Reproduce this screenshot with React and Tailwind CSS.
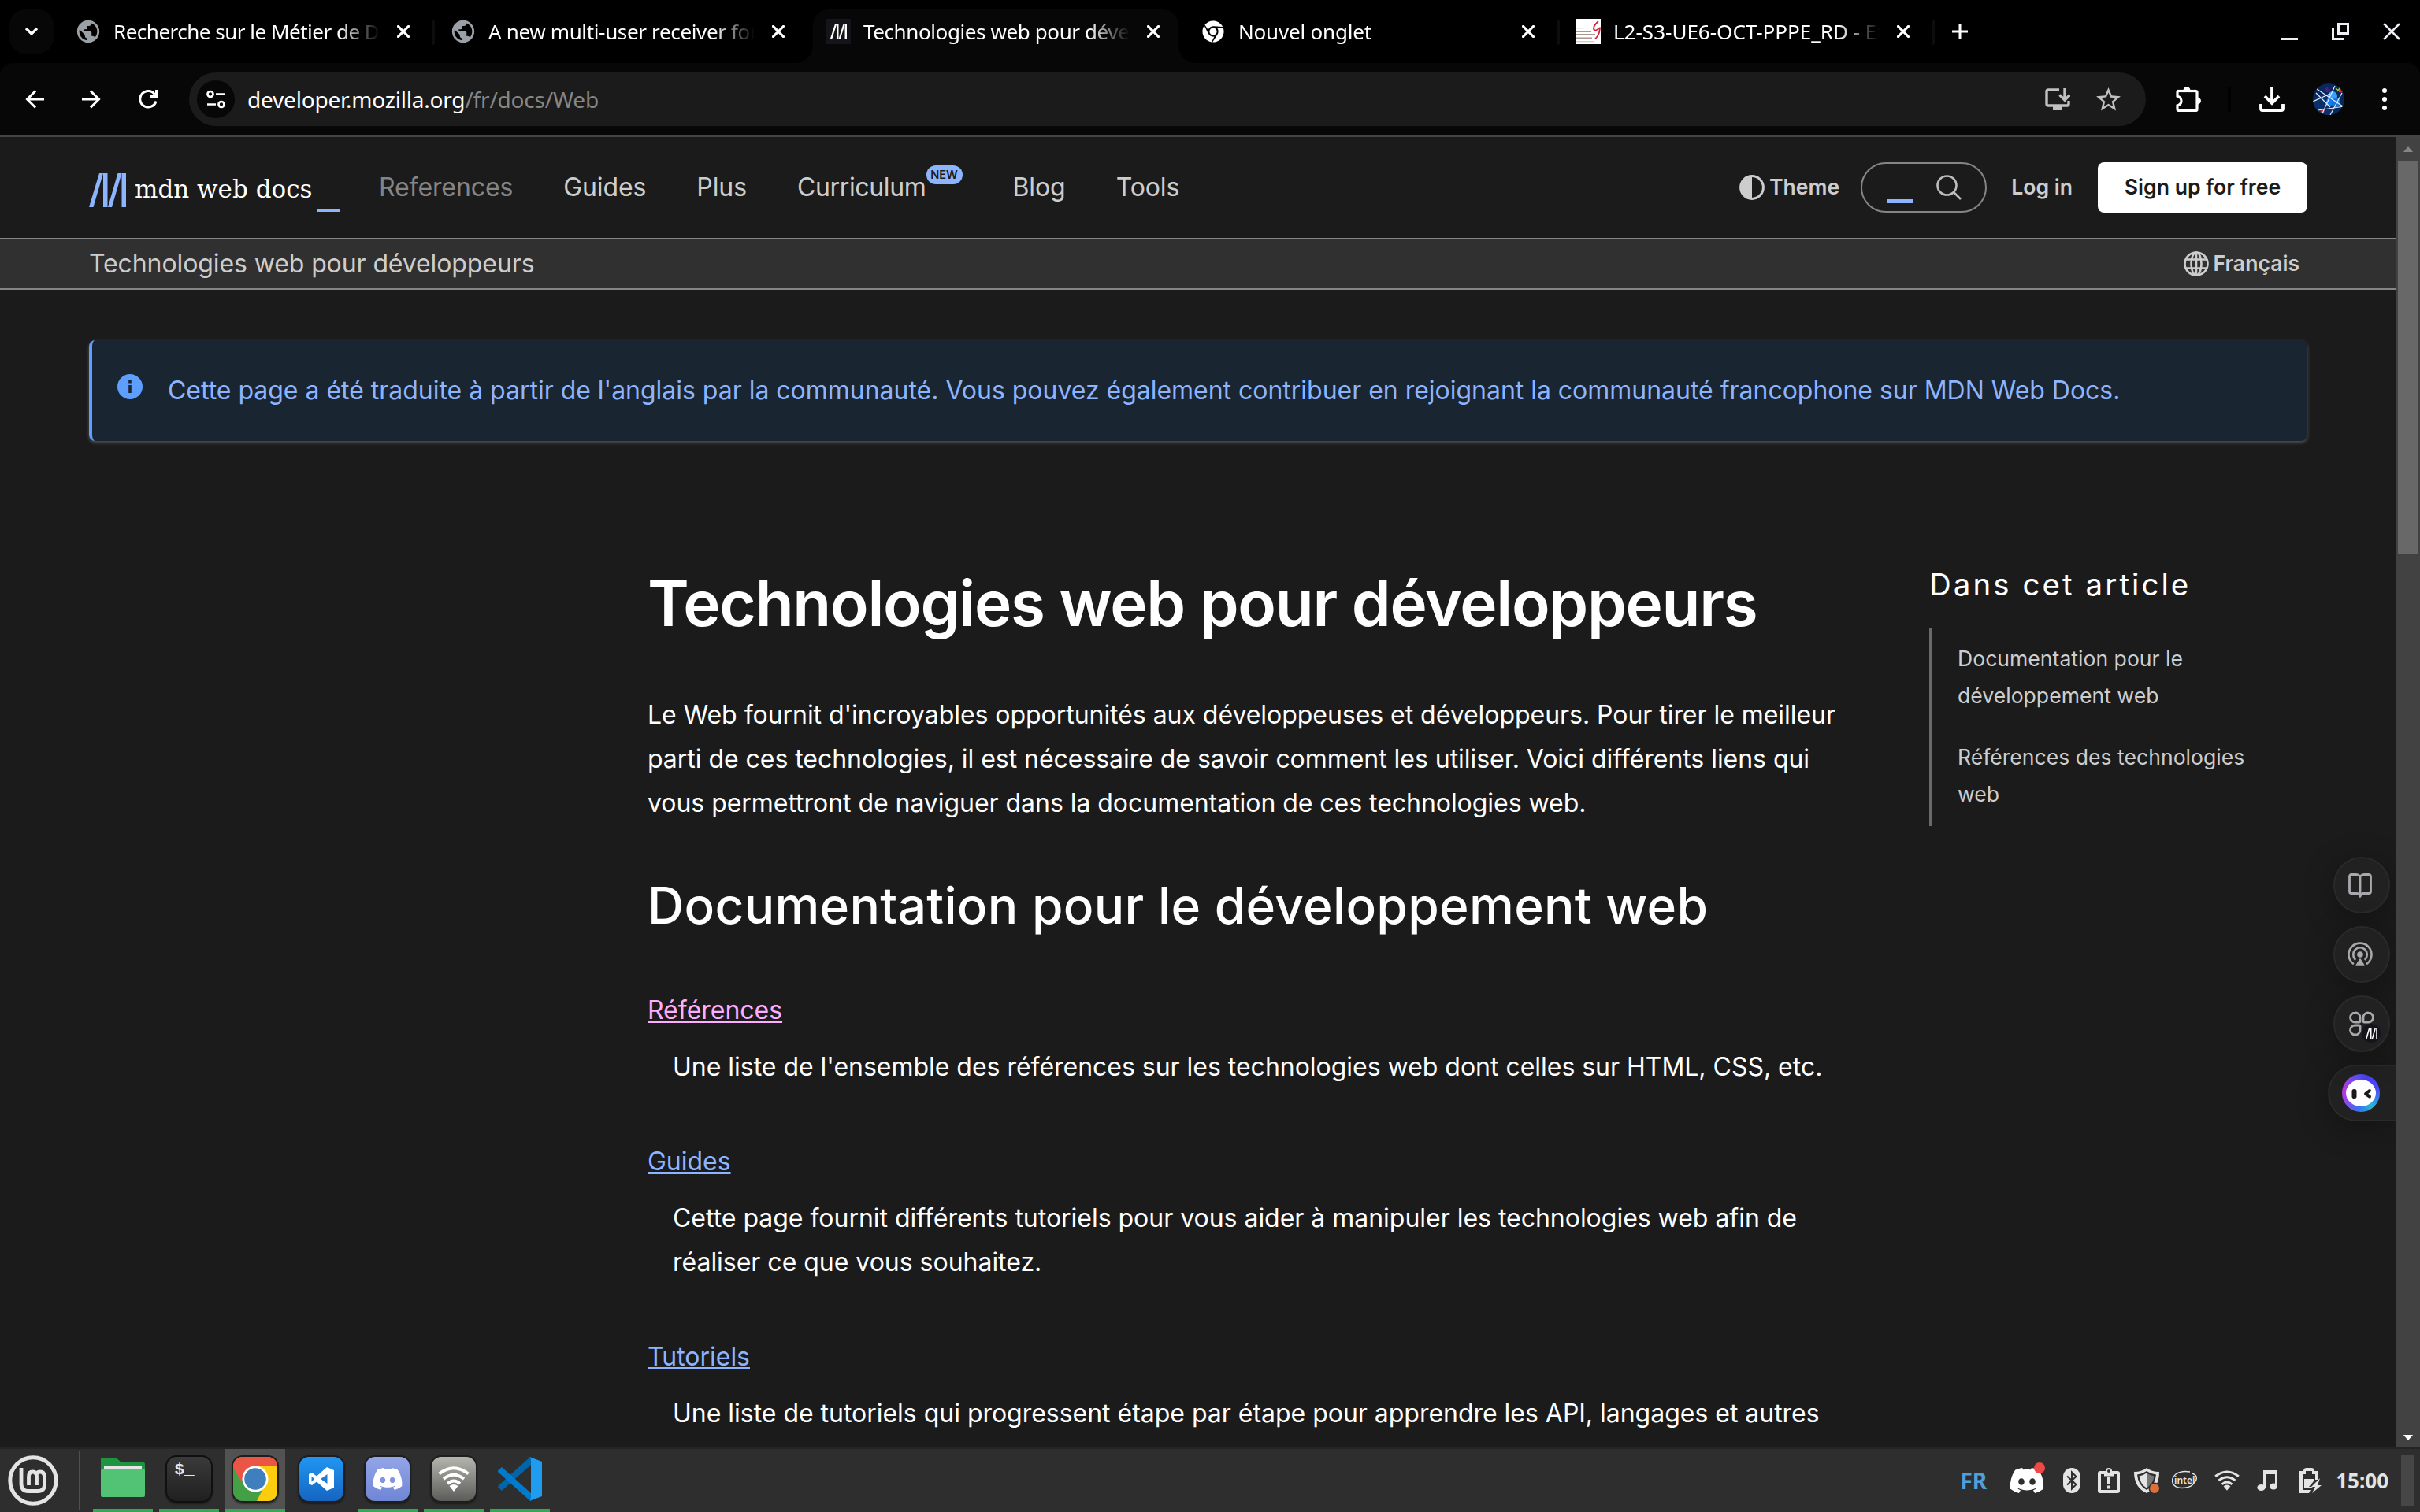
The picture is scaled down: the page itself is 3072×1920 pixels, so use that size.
import React from "react";
import { FaChrome, FaDiscord } from "react-icons/fa";
import { MdPublic, MdStarOutline } from "react-icons/md";

const MdnMark = ({ className }) => (
  <svg viewBox="0 0 47 43" className={className} fill="currentColor" preserveAspectRatio="none">
    <polygon points="0,43 5.5,43 18,0 13,0" />
    <rect x="18" y="0" width="5.5" height="43" />
    <polygon points="24,43 29,43 41.5,0 36.5,0" />
    <rect x="41.5" y="0" width="5.5" height="43" />
  </svg>
);

const Cross = ({ className, w = 3.4 }) => (
  <svg viewBox="0 0 22 22" className={className} stroke="currentColor" strokeWidth={w} strokeLinecap="square">
    <path d="M2 2 20 20M20 2 2 20" />
  </svg>
);

const FacultyIcon = () => (
  <svg viewBox="0 0 32 32" className="h-8 w-8 bg-white">
    <g fill="#a9968c">
      <rect x="1" y="11" width="8" height="1.3" opacity=".5" />
      <rect x="1" y="15" width="19" height="2" />
      <rect x="1" y="19" width="24" height="2" />
      <rect x="1" y="23.5" width="20" height="2" />
      <rect x="1" y="28" width="23" height="1.3" opacity=".5" />
    </g>
    <path d="M29 3C23 8 21.500 13 24.500 14.500c3 .5 5-3 6.500-3-.5 5-1 9-6 14" fill="none" stroke="#d0203a" strokeWidth="1.800" />
  </svg>
);

function Tab({ icon, title, active, separator, spacing = "" }) {
  return (
    <div className="relative h-20 w-[476px] shrink-0 pt-3">
      <div className={active ? "flex h-[68px] w-[464px] items-start rounded-t-[20px] bg-[#070707]" : "flex h-[68px] w-[464px] items-start"}>
        <div className="flex h-14 w-full items-center pl-4">
          <div className="flex h-8 w-8 items-center justify-center">{icon}</div>
          <div
            className={
              "ml-4 w-[338px] whitespace-nowrap text-[26px] leading-10 text-white [mask-image:linear-gradient(to_right,#000_286px,transparent_338px)] " + spacing
            }
          >
            {title}
          </div>
          <Cross className="ml-[22px] h-4 w-4 text-white" w={4.4} />
        </div>
      </div>
      {separator && <div className="absolute left-[468px] top-[25px] h-8 w-1 rounded bg-[#0d0d0d]" />}
      {active && (
        <>
          <svg viewBox="0 0 24 24" className="absolute -left-6 bottom-0 h-6 w-6" fill="#070707"><path d="M24 0v24H0C16 24 24 14 24 0Z" /></svg>
          <svg viewBox="0 0 24 24" className="absolute left-[464px] bottom-0 h-6 w-6" fill="#070707"><path d="M0 0v24h24C8 24 0 14 0 0Z" /></svg>
        </>
      )}
    </div>
  );
}

const Globe = () => <MdPublic className="h-[34px] w-[34px] shrink-0 text-[#9aa0a6]" />;

function TabStrip() {
  return (
    <div className="flex h-20 items-start bg-black">
      <div className="ml-3 mt-3 flex h-14 w-14 items-center justify-center rounded-[20px] bg-[#070707]">
        <svg viewBox="0 0 18 12" className="h-3 w-[18px]" fill="none" stroke="#fff" strokeWidth="3.2"><path d="M2 2l7 7 7-7" /></svg>
      </div>
      <div className="ml-3 flex">
        <Tab icon={<Globe />} title="Recherche sur le Métier de D" spacing="tracking-[-0.5px]" separator />
        <Tab icon={<Globe />} title="A new multi-user receiver for" spacing="tracking-[-0.35px]" />
        <Tab
          active
          icon={<div className="flex h-8 w-8 items-center justify-center bg-[#15141a]"><MdnMark className="h-[18px] w-[21px] text-white" /></div>}
          title="Technologies web pour déve"
          spacing="tracking-[-0.4px]"
        />
        <Tab icon={<FaChrome className="h-7 w-7 text-white" />} title="Nouvel onglet" spacing="tracking-[-0.2px]" separator />
        <Tab icon={<FacultyIcon />} title="L2-S3-UE6-OCT-PPPE_RD - Ex" separator />
      </div>
      <svg viewBox="0 0 20 20" className="ml-[18px] mt-[30px] h-5 w-5" stroke="#fff" strokeWidth="3"><path d="M10 0v20M0 10h20" /></svg>
      <div className="ml-auto flex items-end gap-[43px] pr-[25px] pt-[29px]">
        <div className="h-[3px] w-[22px] bg-[#f0eef5]" />
        <svg viewBox="0 0 22 22" className="h-[22px] w-[22px]" fill="none" stroke="#f0eef5" strokeWidth="3"><path d="M8.5 1.5h12v12h-12zM1.5 6.500v14H15" /></svg>
        <Cross className="h-[22px] w-[22px] text-[#f0eef5]" w={2.6} />
      </div>
    </div>
  );
}

function Toolbar() {
  return (
    <div className="bg-black">
      <div className="flex h-[92px] items-center rounded-t-2xl bg-[#070707] text-white">
        <svg viewBox="0 0 24 24" className="ml-8 h-6 w-6" fill="none" stroke="currentColor" strokeWidth="3"><path d="M24 12H3M13 1.500 2.500 12 13 22.500" /></svg>
        <svg viewBox="0 0 24 24" className="ml-12 h-6 w-6" fill="none" stroke="currentColor" strokeWidth="3"><path d="M0 12h21M11 1.500 21.500 12 11 22.500" /></svg>
        <svg viewBox="0 0 24 24" className="ml-12 h-6 w-6" fill="none" stroke="currentColor" strokeWidth="3"><path d="M22 14.500A10.300 10.300 0 1 1 20.500 5.800" /><path d="M22.500 0v8.500H14" /></svg>
        <div className="ml-10 flex h-[68px] w-[2484px] items-center rounded-full bg-[#1b1b1b]">
          <div className="ml-2.5 flex h-12 w-12 items-center justify-center rounded-full bg-[#070707]">
            <svg viewBox="0 0 24 24" className="h-6 w-6" fill="none" stroke="#fff" strokeWidth="2.700"><circle cx="5" cy="5.500" r="3.500" /><path d="M12 5.500h11M1 18.500h11" /><circle cx="19" cy="18.500" r="3.500" /></svg>
          </div>
          <div className="ml-4 text-[28px] leading-10 tracking-[-0.2px]">
            developer.mozilla.org<span className="text-[#868686]">/fr/docs/Web</span>
          </div>
          <svg viewBox="0 0 32 29" className="ml-auto h-[29px] w-8" fill="none" stroke="#c0c0c0" strokeWidth="3.400"><path d="M18 2H4Q2 2 2 4v16q0 2 2 2h24q2 0 2-2v-4" /><path d="M25 0v14M18.500 8.500 25 15l6.500-6.500" /><path d="M10 25.500h12" strokeWidth="5" /></svg>
          <MdStarOutline className="ml-[30px] mr-[29px] h-[37px] w-[37px] text-[#c0c0c0]" />
        </div>
        <svg viewBox="0 0 32 32" className="ml-[38px] h-8 w-8">
          <path d="M4 5.500h7M17 5.500h8.500q1.500 0 1.500 1.500V29q0 1.500-1.500 1.500H4q-2 0-2-1.500v-5q5-1.500 5-6t-5-6V7q0-1.500 2-1.500Z" fill="none" stroke="#fff" strokeWidth="3.200" />
          <path d="M2 5.500h24" stroke="#fff" strokeWidth="3.200" />
          <path d="M9.500 5a4.500 5 0 0 1 9 0ZM27 13.500a5 4.500 0 0 1 0 9Z" fill="#fff" />
        </svg>
        <div className="ml-[34px] h-8 w-1 rounded bg-black" />
        <svg viewBox="0 0 32 32" className="ml-9 h-8 w-8" fill="none" stroke="#fff" strokeWidth="3.800"><path d="M16 0v20M7 12l9 9 9-9" /><path d="M2 22v6q0 2 2 2h24q2 0 2-2v-6" /></svg>
        <svg viewBox="0 0 40 40" className="ml-9 h-10 w-10 rounded-full bg-[#08285c]">
          <circle cx="14" cy="28" r="14" fill="#0b3068" />
          <circle cx="25" cy="16" r="6" fill="#3aa0ff" /><circle cx="22" cy="23" r="5" fill="#1580f0" /><circle cx="29" cy="24" r="6" fill="#1376dd" />
          <circle cx="36" cy="9" r="2.500" fill="#d02020" /><circle cx="12" cy="35" r="2.500" fill="#d02a2a" />
          <path d="M15 7l7 2M18 4v7" stroke="#4b1a8c" strokeWidth="2.500" /><path d="M29 6l6 5M35 5l-4 5" stroke="#a8c820" strokeWidth="1.500" />
          <path d="M5 7l33 22M0 23l22-10M4 12l18 18M6 34l34-5M37 12L22 40M28 3L12 38" stroke="#e4ecff" strokeWidth="1.200" />
        </svg>
        <svg viewBox="0 0 6 28" className="ml-12 h-7 w-1.5" fill="#fff"><circle cx="3" cy="3" r="3" /><circle cx="3" cy="14" r="3" /><circle cx="3" cy="25" r="3" /></svg>
      </div>
      <div className="h-0.5 bg-[#444444]" />
    </div>
  );
}

function SiteHeader() {
  return (
    <header>
      <div className="flex h-32 items-center pl-[113px] pr-[113px] text-[32px] text-[#cdcdcd]">
        <div className="flex w-[320px] items-end pt-1">
          <MdnMark className="h-[43px] w-[47px] shrink-0 text-[#8cb4ff]" />
          <span className="ml-[11px] w-[227px] shrink-0 whitespace-nowrap font-['DejaVu_Serif'] text-[31px] leading-[45px] text-white">mdn web docs</span>
          <span className="-mb-[6px] ml-1 h-1 w-[30px] shrink-0 bg-[#8cb4ff]" />
        </div>
        <nav className="ml-12 flex items-center gap-16 tracking-[-0.1px]">
          <span className="text-[#858585]">References</span>
          <span>Guides</span>
          <span>Plus</span>
          <span className="flex items-center tracking-[-0.35px]">
            Curriculum
            <span className="mb-8 flex h-6 w-[46px] items-center justify-center rounded-full bg-[#8cb4ff] text-[14.5px] font-semibold tracking-normal text-[#1b1b1b]">NEW</span>
          </span>
          <span>Blog</span>
          <span>Tools</span>
        </nav>
        <div className="ml-auto flex items-center text-[26.6px] font-semibold">
          <svg viewBox="0 0 32 32" className="h-8 w-8"><circle cx="16" cy="16" r="14.400" fill="none" stroke="#cdcdcd" strokeWidth="3" /><path d="M16 1a15 15 0 0 0 0 30Z" fill="#cdcdcd" /></svg>
          <span className="ml-1.5">Theme</span>
          <div className="ml-[27px] flex h-16 w-40 items-center rounded-full border-2 border-[#858585]">
            <div className="ml-8 mt-[35px] h-[5px] w-8 bg-[#8cb4ff]" />
            <svg viewBox="0 0 32 32" className="ml-[30px] h-8 w-8" fill="none" stroke="#bdbdbd" strokeWidth="2.600"><circle cx="13.500" cy="13.500" r="12" /><path d="M22.500 22.500 31 31" /></svg>
          </div>
          <span className="ml-[31px]">Log in</span>
          <div className="ml-8 flex h-16 w-[266px] items-center justify-center rounded-lg bg-white text-[#1b1b1b]">Sign up for free</div>
        </div>
      </div>
      <div className="flex h-[66px] items-center justify-between border-y-2 border-[#858585] bg-[#303030] pl-[113px] pr-[123px] text-[32px] text-[#cdcdcd]">
        <span className="tracking-[-0.1px]">Technologies web pour développeurs</span>
        <span className="flex items-center gap-1.5 text-[26.6px] font-semibold">
          <svg viewBox="0 0 32 32" className="h-8 w-8" fill="none" stroke="#cdcdcd" strokeWidth="2.600"><circle cx="16" cy="16" r="14.500" /><ellipse cx="16" cy="16" rx="6.500" ry="14.500" /><path d="M16 1v30M3 10.500h26M3 21.500h26" /></svg>
          Français
        </span>
      </div>
    </header>
  );
}

const TOC = [
  ["Documentation pour le", "développement web"],
  ["Références des technologies", "web"],
];

const ENTRIES = [
  { term: "Références", visited: true, lines: ["Une liste de l'ensemble des références sur les technologies web dont celles sur HTML, CSS, etc."] },
  { term: "Guides", lines: ["Cette page fournit différents tutoriels pour vous aider à manipuler les technologies web afin de", "réaliser ce que vous souhaitez."] },
  { term: "Tutoriels", lines: ["Une liste de tutoriels qui progressent étape par étape pour apprendre les API, langages et autres"] },
];

function Article() {
  return (
    <main className="flex whitespace-nowrap">
      <article className="ml-[822px] w-[1600px] text-[32px] leading-[56px] tracking-[-0.02px] text-white">
        <h1 className="mt-[158px] text-[80px] font-semibold leading-[96px] tracking-[-1.28px]">Technologies web pour développeurs</h1>
        <p className="mt-[66px] tracking-[-0.04px]">
          Le Web fournit d'incroyables opportunités aux développeuses et développeurs. Pour tirer le meilleur<br />
          parti de ces technologies, il est nécessaire de savoir comment les utiliser. Voici différents liens qui<br />
          vous permettront de naviguer dans la documentation de ces technologies web.
        </p>
        <h2 className="mt-[64px] text-[64px] font-medium leading-[76px] tracking-[0.3px]">Documentation pour le développement web</h2>
        <dl className="mt-[67px]">
          {ENTRIES.map((e) => (
            <React.Fragment key={e.term}>
              <dt>
                <a className={e.visited ? "text-[#ffadff] underline" : "text-[#8cb4ff] underline"}>{e.term}</a>
              </dt>
              <dd className="mb-16 ml-8 mt-4">
                {e.lines.map((l) => (
                  <div key={l}>{l}</div>
                ))}
              </dd>
            </React.Fragment>
          ))}
        </dl>
      </article>
      <aside className="ml-[27px] mt-[158px] text-[#cdcdcd]">
        <h2 className="h-12 text-[38.4px] leading-[49px] tracking-[3.1px] text-white">Dans cet article</h2>
        <ul className="mt-8 border-l-4 border-[#6a6a6a] text-[26.6px] leading-[47px]">
          {TOC.map((lines) => (
            <li key={lines[0]} className="pb-[16.7px] pl-8 pt-[14.7px]">
              {lines.map((l) => (
                <div key={l}>{l}</div>
              ))}
            </li>
          ))}
        </ul>
      </aside>
    </main>
  );
}

function SideButtons() {
  const round = "mr-2 flex h-[72px] w-[72px] items-center justify-center rounded-full border-2 border-[#2a2a2a] bg-[#212121] shadow-[0_8px_40px_rgba(0,0,0,0.3)]";
  return (
    <div className="absolute right-0 top-[914px] flex flex-col items-end gap-4">
      <div className={round}>
        <svg viewBox="0 0 32 32" className="-ml-1 h-8 w-8" fill="none" stroke="#a8a8ad" strokeWidth="2.800" strokeLinejoin="round"><path d="M16 5Q14 2.500 11 2.500H5Q2.500 2.500 2.500 5v19Q2.500 26.500 5 26.500h7q3 0 4 4 1-4 4-4h7q2.500 0 2.500-2.500V5Q29.500 2.500 27 2.500h-6Q18 2.500 16 5ZM16 5v24" /></svg>
      </div>
      <div className={round}>
        <svg viewBox="0 0 32 32" className="-ml-1 h-8 w-8" fill="none" stroke="#a8a8ad" strokeWidth="2.600" strokeLinecap="round"><path d="M7 27.500A14.500 14.500 0 1 1 25 27.500" /><path d="M9.500 22A8.800 8.800 0 1 1 22.500 22" /><circle cx="16" cy="16" r="3.800" fill="#a8a8ad" stroke="none" /><path d="M16 22 11 30H21Z" fill="#a8a8ad" strokeLinejoin="round" strokeWidth="1.500" /></svg>
      </div>
      <div className={round + " relative"}>
        <svg viewBox="0 0 32 32" className="h-8 w-8" fill="none" stroke="#a8a8ad" strokeWidth="2.800" strokeLinejoin="round"><path d="M7.500 2a6 6 0 1 0 0 12H12.500Q14 14 14 12.500V8A6 6 0 0 0 7.500 2ZM24.500 2a6 6 0 1 1 0 12H19.500Q18 14 18 12.500V8A6 6 0 0 1 24.500 2ZM7.500 30a6 6 0 1 1 0-12H12.500Q14 18 14 19.500V24A6 6 0 0 1 7.500 30Z" /></svg>
        <div className="absolute left-[34px] top-[34px] flex h-6 w-6 items-center justify-center rounded-full bg-[#15141a]"><MdnMark className="h-[14px] w-[15px] text-white" /></div>
      </div>
      <div className="flex h-[72px] w-[87px] items-center rounded-l-full border-2 border-r-0 border-[#2a2a2a] bg-[#212121] pl-4 shadow-[0_8px_40px_rgba(0,0,0,0.3)]">
        <div className="flex h-12 w-12 items-center justify-center rounded-full bg-[conic-gradient(from_20deg,#4a3cf5,#4a50f8_60deg,#22b8d8_120deg,#3a70f0_170deg,#a040e8_230deg,#b23ae0_270deg,#5a50f5_330deg,#4a3cf5)]">
          <svg viewBox="0 0 38 34" className="h-[34px] w-[38px]"><ellipse cx="19" cy="17" rx="19" ry="17" fill="#fff" /><rect x="7.500" y="12" width="6" height="12" rx="2.800" fill="#1a1a1a" /><path d="M30 14 25 18l5 3.500" fill="none" stroke="#1a1a1a" strokeWidth="4" strokeLinecap="round" strokeLinejoin="round" /></svg>
        </div>
      </div>
    </div>
  );
}

function ScrollBar() {
  return (
    <div className="flex h-full w-[30px] shrink-0 flex-col items-center justify-between bg-[#424242]">
      <div className="flex flex-col items-center">
        <svg viewBox="0 0 14 8" className="mb-[11px] mt-3 h-[7px] w-[14px]" fill="#858585"><path d="M7 0l7 8H0Z" /></svg>
        <div className="h-[500px] w-[26px] bg-[#686868]" />
      </div>
      <svg viewBox="0 0 14 8" className="mb-[9px] h-[7px] w-[14px]" fill="#fff"><path d="M0 0h14L7 8Z" /></svg>
    </div>
  );
}

const tile = "h-[60px] w-[60px] rounded-[14px] border-2 border-[#1e1e1e] flex items-center justify-center overflow-hidden shadow-[0_2px_2px_rgba(0,0,0,0.4)]";

const WifiFan = ({ className, color }) => (
  <svg viewBox="0 0 40 32" className={className} fill="none" stroke={color} strokeWidth="3.800"><path d="M1.500 9.500Q20-5 38.500 9.500M7 16Q20 5.500 33 16M12 22Q20 15 28 22" /><path d="M14.500 25Q20 21 25.500 25L20 32Z" fill={color} stroke="none" /></svg>
);

const CodeMark = ({ className }) => (
  <svg viewBox="0 0 56 56" className={className}>
    <path d="M0 38.500 5 43 42 10 42 0 40 1 1 36Z" fill="#0065a9" />
    <path d="M0 17.500 5 13 42 46V56L40 55 1 20Q-.5 19 0 17.500Z" fill="#007acc" />
    <path d="M40 0 56 6V50L40 56Q42 55 42 52V4Q42 1 40 0Z" fill="#1f9cf0" />
  </svg>
);

const APPS = [
  {
    id: "files", open: true,
    icon: (
      <svg viewBox="0 0 56 50" className="-mt-1 h-[50px] w-14"><path d="M0 2Q0 0 2 0H18q2 0 3 1.500L26 6H54q2 0 2 2V20H0Z" fill="#1f9440" /><path d="M4 16V11q0-1 1-1H51q1 0 1 1v5Z" fill="#e6e6e6" /><path d="M0 17Q0 14 3 14H53q3 0 3 3V48q0 2-2 2H2q-2 0-2-2Z" fill="#52c274" /></svg>
    ),
  },
  {
    id: "terminal", open: true,
    icon: <div className={tile + " border-[#101010] bg-[linear-gradient(#3a3a3a,#202020)]"}><span className="mb-6 mr-3 font-['Liberation_Mono'] text-[21px] font-bold leading-none text-[#e8e8e8]">$_</span></div>,
  },
  {
    id: "chrome", open: true, focused: true,
    icon: (
      <div className={tile}>
        <svg viewBox="0 0 60 60" className="h-[60px] w-[60px] shrink-0">
          <rect width="60" height="60" fill="#43a047" /><path d="M30 13H60V60H31L43 36Z" fill="#fccc0f" /><path d="M0 0H60V13H30L12 33 0 12Z" fill="#ea5545" />
          <circle cx="30" cy="30" r="16.500" fill="#fff" /><circle cx="30" cy="30" r="13.800" fill="#3f7fbd" />
        </svg>
      </div>
    ),
  },
  {
    id: "vscode-tile",
    icon: (
      <div className={tile + " bg-[linear-gradient(#2196f3,#1565c0)]"}>
        <svg viewBox="0 0 32 30" className="h-[30px] w-8" fill="#fff" fillRule="evenodd"><path d="M23 0 32 4V26L23 30 10 18.500 4 23 0 21V9L4 7 10 11.500ZM23.500 9 15 15l8.500 6ZM3.500 11.500v7L7 15Z" /></svg>
      </div>
    ),
  },
  { id: "discord", open: true, icon: <div className={tile + " bg-[linear-gradient(#93a5e8,#6f86d6)]"}><FaDiscord className="h-10 w-10 text-white" /></div> },
  { id: "wifi", open: true, icon: <div className={tile + " bg-[linear-gradient(#b5b5b0,#5c5d58)]"}><WifiFan className="h-8 w-10" color="#fff" /></div> },
  { id: "code", open: true, icon: <CodeMark className="h-14 w-14" /> },
];

function Taskbar() {
  return (
    <div className="flex h-[82px] items-center border-t-2 border-[#242424] bg-[#2e2e2e]">
      <svg viewBox="0 0 64 64" className="ml-2.5 h-16 w-16" fill="none" stroke="#e4e4e4" strokeWidth="5"><circle cx="32" cy="32" r="29.200" /><path d="M17 16V36Q17 45.500 26 45.500H38Q46.500 45.500 46.500 37V28Q46.500 21 41 21T36.500 27V38M36.500 27Q36.500 21 31.500 21T26.500 27V38" strokeWidth="4.800" /></svg>
      <div className="ml-[26px] h-[76px] w-0.5 bg-[#505050]" />
      <div className="ml-4 flex gap-2">
        {APPS.map((a) => (
          <div key={a.id} className={a.focused ? "flex h-20 w-[76px] flex-col bg-[#525252]" : "flex h-20 w-[76px] flex-col"}>
            <div className="flex h-[76px] items-center justify-center">{a.icon}</div>
            {a.open && <div className="h-1 bg-[#34a853]" />}
          </div>
        ))}
      </div>
      <div className="ml-auto flex items-center font-['Noto_Sans'] font-bold">
        <span className="text-[28px] font-bold leading-none text-[#4f9fdc]">FR</span>
        <div className="relative ml-7"><FaDiscord className="h-[46px] w-[46px] text-white" /><div className="absolute right-0 top-0 h-3.5 w-3.5 rounded-full bg-[#f04747]" /></div>
        <svg viewBox="0 0 22 32" className="ml-[23px] h-8 w-[22px]"><rect width="22" height="32" rx="11" fill="#e4e4e4" /><path d="M5 10.500 16.500 21 11 26.500V5.500L16.500 11 5 21.500" fill="none" stroke="#2e2e2e" strokeWidth="2" /></svg>
        <svg viewBox="0 0 28 32" className="ml-[22px] h-8 w-7" fill="none" stroke="#e4e4e4" strokeWidth="4"><rect x="2" y="6" width="24" height="24" rx="1" /><path d="M8 8h12" strokeWidth="5" /><circle cx="14" cy="4" r="3" strokeWidth="2" fill="#2e2e2e" /><path d="M14 12v8M14 22.500v4" /></svg>
        <svg viewBox="0 0 32 32" className="ml-[18px] h-8 w-8"><path d="M16 0Q22 5 32 5 32 25 16 32 0 25 0 5 10 5 16 0Z" fill="#e4e4e4" /><path d="M16 4Q22 8 28 8.500 27 22 16 28 5 22 4 8.500 10 8 16 4Z" fill="#2e2e2e" /><path d="M16 6.500V25.500Q8 21 6.500 10.500 11 10 16 6.500Z" fill="#e4e4e4" /><path d="M16 6.500V25.500Q24 21 25.500 10.500 21 10 16 6.500Z" fill="#777" /><circle cx="26" cy="26" r="7.500" fill="#2e2e2e" /><circle cx="26" cy="26" r="6" fill="#dc703c" /></svg>
        <div className="relative ml-4 flex h-8 w-8 items-center justify-center">
          <svg viewBox="0 0 32 24" className="absolute inset-0 h-8 w-8" fill="none" stroke="#e4e4e4" strokeWidth="1.400"><path d="M23 1Q12-1 5 4-1 9 1 15 3 21 12 21.500 22 21.500 27 17M26 3Q34 6 30 13L27 15.500" /></svg>
          <span className="text-[12px] font-semibold leading-none text-[#e4e4e4]">intel</span>
        </div>
        <WifiFan className="ml-[22px] h-[26px] w-8" color="#e4e4e4" />
        <svg viewBox="0 0 26 26" className="ml-[22px] h-[26px] w-[26px]" fill="#e4e4e4"><path d="M8 0H26V21H23V5H11V22H8Z" /><ellipse cx="5.500" cy="22" rx="5.200" ry="4" /><ellipse cx="21" cy="20.500" rx="5" ry="4" /></svg>
        <svg viewBox="0 0 28 32" className="ml-[28px] h-8 w-7" fill="#e4e4e4"><path d="M4 4H5Q5 0 9 0h6q4 0 4 4h5V15H20V8H16V4H8V8H4V28H14L12 32H0V4ZM6 14H18V17L12 24H17L14 26H6Z" /><path d="M26 13 15 24h5l-4 8L28 22H23Z" /></svg>
        <span className="ml-[18px] text-[26px] font-bold text-[#e4e4e4]">15:00</span>
        <div className="ml-4 mr-2 h-16 w-4 bg-[#464646]" />
      </div>
    </div>
  );
}

export default function App() {
  return (
    <div className="flex h-[1920px] w-[3072px] flex-col overflow-hidden bg-[#1b1b1b] font-['Noto_Sans',sans-serif]">
      <TabStrip />
      <Toolbar />
      <div className="flex h-[1664px] shrink-0">
        <div className="relative h-full w-[3042px] overflow-hidden font-['Inter',sans-serif]">
          <SiteHeader />
          <div className="mx-[113px] mt-16 flex h-32 items-center rounded-lg border-l-4 border-[#5e9eff] bg-[#192530] text-[32px] text-[#8cb4ff] shadow-[0_2px_4px_rgba(255,255,255,0.25)]">
            <svg viewBox="0 0 32 32" className="-mt-[10px] ml-8 h-8 w-8"><circle cx="16" cy="16" r="16" fill="#5e9eff" /><path d="M14.200 14h3.600v10h-3.600zM14.200 8h3.600v3.600h-3.600z" fill="#192530" /></svg>
            <span className="ml-8 whitespace-nowrap tracking-[-0.02px]">Cette page a été traduite à partir de l'anglais par la communauté. Vous pouvez également contribuer en rejoignant la communauté francophone sur MDN Web Docs.</span>
          </div>
          <Article />
          <SideButtons />
        </div>
        <ScrollBar />
      </div>
      <Taskbar />
    </div>
  );
}
